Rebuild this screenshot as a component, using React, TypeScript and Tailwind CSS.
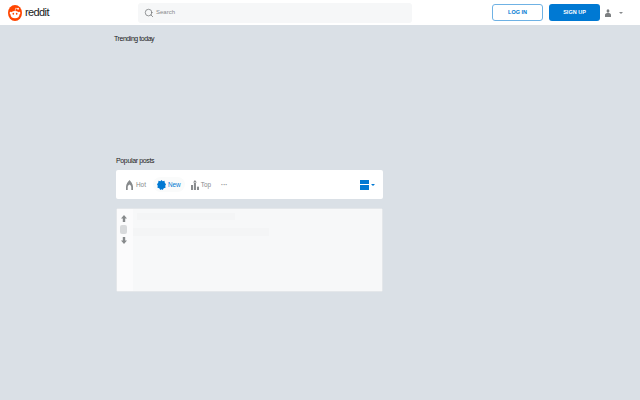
import { Search } from 'lucide-react'

function Logo() {
  return (
    <svg width="14" height="16" viewBox="0 0 20 20" preserveAspectRatio="none" className="shrink-0">
      <circle cx="10" cy="10" r="10" fill="#ff4500" />
      <ellipse cx="10" cy="12" rx="6.4" ry="4.6" fill="#fff" />
      <circle cx="3.9" cy="10" r="1.5" fill="#fff" />
      <circle cx="16.1" cy="10" r="1.5" fill="#fff" />
      <circle cx="7.6" cy="11" r="1.2" fill="#ff4500" />
      <circle cx="12.4" cy="11" r="1.2" fill="#ff4500" />
      <path d="M10 8 L11 4 L14 4.6" stroke="#fff" strokeWidth="0.8" fill="none" />
      <circle cx="14.4" cy="4.6" r="1.2" fill="#fff" />
    </svg>
  )
}

function UserIcon() {
  return (
    <svg width="6" height="8" viewBox="0 0 10 11" preserveAspectRatio="none" fill="#7c7f81">
      <circle cx="5" cy="2.6" r="2.4" />
      <path d="M0 11 V8 C0 6.4 2.5 5.6 5 5.6 C7.5 5.6 10 6.4 10 8 V11 Z" />
    </svg>
  )
}

function HotIcon() {
  return (
    <svg width="7" height="10" viewBox="0 0 9 12" preserveAspectRatio="none" fill="#878a8c">
      <path d="M4.5 0 C6 2 9 4.5 9 8 V12 H6.8 V8.4 C6.8 7.2 5.6 6 4.5 5.4 C3.4 6 2.2 7.2 2.2 8.4 V12 H0 V8 C0 4.5 3 2 4.5 0 Z" />
    </svg>
  )
}

function NewIcon() {
  return (
    <svg width="9" height="10" viewBox="0 0 12 12" preserveAspectRatio="none" fill="#0079d3">
      <path d="M6 0 L7.6 1.5 L10 1 L10.4 3.4 L12 5 L11 7 L11.4 9.4 L9 10 L7.6 12 L6 11 L4.4 12 L3 10 L0.6 9.4 L1 7 L0 5 L1.6 3.4 L2 1 L4.4 1.5 Z" />
    </svg>
  )
}

function TopIcon() {
  return (
    <svg width="8" height="10" viewBox="0 0 11 12" preserveAspectRatio="none" fill="#878a8c">
      <rect x="0" y="6" width="2.8" height="6" />
      <rect x="4" y="3.5" width="2.8" height="8.5" />
      <rect x="8.2" y="8" width="2.8" height="4" />
      <path d="M5.4 0 L8 3 H2.8 Z" />
    </svg>
  )
}

function Arrow({ down }: { down?: boolean }) {
  return (
    <svg width="6" height="7" viewBox="0 0 8 9" preserveAspectRatio="none" fill="#878a8c" className={down ? 'rotate-180' : ''}>
      <path d="M4 0 L8 4.5 H5.6 V9 H2.4 V4.5 H0 Z" />
    </svg>
  )
}

export default function App() {
  return (
    <div className="w-[640px] h-[400px] overflow-hidden bg-[#dae0e6] font-['Liberation_Sans',sans-serif]">
      <header className="h-[25px] bg-white flex items-center">
        <div className="w-[138px] flex items-center gap-[3px] pl-2">
          <Logo />
          <span className="text-[11px] leading-none text-[#1a1a1b] mb-px tracking-[-0.6px]">reddit</span>
        </div>
        <div className="w-[274px] h-5 bg-[#f6f7f8] rounded-[3px] flex items-center pl-[6px] gap-[2px]">
          <Search size={10} strokeWidth={1.5} className="text-[#5c5f61]" />
          <span className="text-[6px] text-[#878a8c]">Search</span>
        </div>
        <div className="ml-20 flex items-center">
          <button className="w-[51px] h-[17px] border border-[#6fb2e4] rounded-[3px] text-[5.5px] font-bold text-[#0079d3]">
            LOG IN
          </button>
          <button className="ml-[6px] w-[51px] h-[17px] bg-[#0079d3] rounded-[3px] text-[5.5px] font-bold text-white">
            SIGN UP
          </button>
          <div className="ml-[5px] flex items-center gap-[8px]">
            <UserIcon />
            <div className="border-x-[2px] border-t-[2px] border-x-transparent border-t-[#878a8c]" />
          </div>
        </div>
      </header>

      <main className="pl-[114px]">
        <h2 className="pt-[9px] h-[129px] text-[7px] leading-[9px] tracking-[-0.45px] font-normal text-[#1a1a1b]">Trending today</h2>
        <div className="pl-[2px] w-[269px]">
          <h2 className="text-[7px] leading-[9px] tracking-[-0.35px] pt-[2px] h-[16px] text-[#1a1a1b]">Popular posts</h2>
          <div className="h-[29px] bg-white rounded-[2px] flex items-center pl-[10px] pr-[8px] text-[6.4px]">
            <div className="flex items-center gap-[3px] text-[#878a8c]">
              <HotIcon />
              <span>Hot</span>
            </div>
            <div className="ml-[7px] px-[4px] h-[15px] rounded-full bg-[#fafbfb] flex items-center gap-[2px] text-[#0079d3]">
              <NewIcon />
              <span>New</span>
            </div>
            <div className="ml-[6px] flex items-center gap-[2px] text-[#878a8c]">
              <TopIcon />
              <span>Top</span>
            </div>
            <span className="ml-[10px] mt-[2px] text-[#878a8c] font-bold leading-none">···</span>
            <div className="ml-auto flex items-center gap-[2px]">
              <div className="w-[9px] h-[10px] flex flex-col gap-px">
                <div className="flex-1 bg-[#0079d3]" />
                <div className="flex-1 bg-[#0079d3]" />
              </div>
              <div className="border-x-[2px] border-t-[2px] border-x-transparent border-t-[#0079d3]" />
            </div>
          </div>
          <div className="mt-[9px] h-[84px] bg-white border border-[#e4e7ea] rounded-[2px] flex overflow-hidden">
            <div className="w-[16px] bg-[#fbfbfc] shrink-0">
              <div className="ml-[3px] w-[7px] pt-[6px] flex flex-col items-center gap-[3px]">
                <Arrow />
                <div className="w-[7px] h-[9px] bg-[#d8dadc] rounded-[2px]" />
                <Arrow down />
              </div>
            </div>
            <div className="flex-1 bg-[#f7f8f9] pt-[4px]">
              <div className="ml-[4px] w-[98px] h-[7px] bg-[#f4f5f6]" />
              <div className="mt-[8px] w-[136px] h-[8px] bg-[#f4f5f6]" />
            </div>
          </div>
        </div>
      </main>
    </div>
  )
}
